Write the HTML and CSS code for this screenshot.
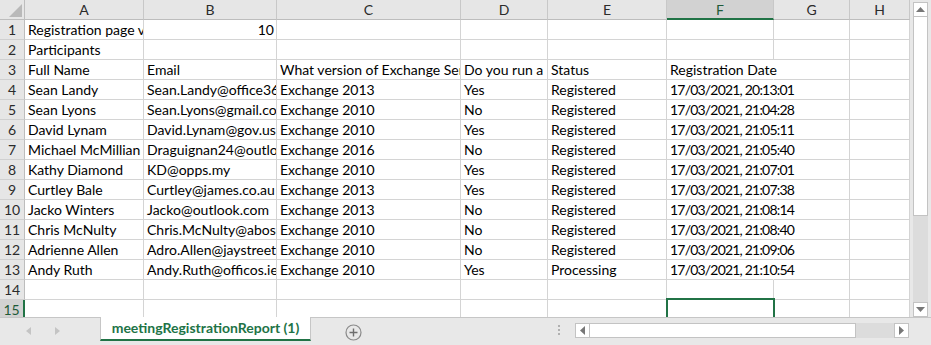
FILE: index.html
```html
<!DOCTYPE html>
<html lang="en">
<head>
<meta charset="utf-8">
<title>meetingRegistrationReport (1)</title>
<link rel="stylesheet" href="styles.css">
</head>
<body>
<div class="app">
  <div class="main">
    <div class="sheet">
      <div class="corner"><svg width="13" height="13" viewBox="0 0 13 13"><polygon points="13,0 13,13 0,13" fill="#b9b9b9"/></svg></div>
      <div class="ch">A</div><div class="ch">B</div><div class="ch">C</div><div class="ch">D</div><div class="ch">E</div><div class="ch selcol">F</div><div class="ch">G</div><div class="ch">H</div>

      <div class="rh">1</div><div class="c">Registration page views</div><div class="c num">10</div><div class="c"></div><div class="c"></div><div class="c"></div><div class="c"></div><div class="c"></div><div class="c"></div>
      <div class="rh">2</div><div class="c">Participants</div><div class="c"></div><div class="c"></div><div class="c"></div><div class="c"></div><div class="c"></div><div class="c"></div><div class="c"></div>
      <div class="rh">3</div><div class="c">Full Name</div><div class="c">Email</div><div class="c">What version of Exchange Server do you run?</div><div class="c">Do you run a hybrid deployment?</div><div class="c">Status</div><div class="c of">Registration Date</div><div class="c"></div><div class="c"></div>
      <div class="rh">4</div><div class="c">Sean Landy</div><div class="c">Sean.Landy@office365.com</div><div class="c">Exchange 2013</div><div class="c">Yes</div><div class="c">Registered</div><div class="c of dt">17/03/2021, 20:13:01</div><div class="c"></div><div class="c"></div>
      <div class="rh">5</div><div class="c">Sean Lyons</div><div class="c">Sean.Lyons@gmail.com</div><div class="c">Exchange 2010</div><div class="c">No</div><div class="c">Registered</div><div class="c of dt">17/03/2021, 21:04:28</div><div class="c"></div><div class="c"></div>
      <div class="rh">6</div><div class="c">David Lynam</div><div class="c">David.Lynam@gov.us</div><div class="c">Exchange 2010</div><div class="c">Yes</div><div class="c">Registered</div><div class="c of dt">17/03/2021, 21:05:11</div><div class="c"></div><div class="c"></div>
      <div class="rh">7</div><div class="c">Michael McMillian</div><div class="c">Draguignan24@outlook.com</div><div class="c">Exchange 2016</div><div class="c">No</div><div class="c">Registered</div><div class="c of dt">17/03/2021, 21:05:40</div><div class="c"></div><div class="c"></div>
      <div class="rh">8</div><div class="c">Kathy Diamond</div><div class="c">KD@opps.my</div><div class="c">Exchange 2010</div><div class="c">Yes</div><div class="c">Registered</div><div class="c of dt">17/03/2021, 21:07:01</div><div class="c"></div><div class="c"></div>
      <div class="rh">9</div><div class="c">Curtley Bale</div><div class="c">Curtley@james.co.au</div><div class="c">Exchange 2013</div><div class="c">Yes</div><div class="c">Registered</div><div class="c of dt">17/03/2021, 21:07:38</div><div class="c"></div><div class="c"></div>
      <div class="rh">10</div><div class="c">Jacko Winters</div><div class="c">Jacko@outlook.com</div><div class="c">Exchange 2013</div><div class="c">No</div><div class="c">Registered</div><div class="c of dt">17/03/2021, 21:08:14</div><div class="c"></div><div class="c"></div>
      <div class="rh">11</div><div class="c">Chris McNulty</div><div class="c">Chris.McNulty@abosoft.com</div><div class="c">Exchange 2010</div><div class="c">No</div><div class="c">Registered</div><div class="c of dt">17/03/2021, 21:08:40</div><div class="c"></div><div class="c"></div>
      <div class="rh">12</div><div class="c">Adrienne Allen</div><div class="c">Adro.Allen@jaystreet.com</div><div class="c">Exchange 2010</div><div class="c">No</div><div class="c">Registered</div><div class="c of dt">17/03/2021, 21:09:06</div><div class="c"></div><div class="c"></div>
      <div class="rh">13</div><div class="c">Andy Ruth</div><div class="c">Andy.Ruth@officos.ie</div><div class="c">Exchange 2010</div><div class="c">Yes</div><div class="c">Processing</div><div class="c of dt">17/03/2021, 21:10:54</div><div class="c"></div><div class="c"></div>
      <div class="rh">14</div><div class="c"></div><div class="c"></div><div class="c"></div><div class="c"></div><div class="c"></div><div class="c"></div><div class="c"></div><div class="c"></div>
      <div class="rh selrow">15</div><div class="c"></div><div class="c"></div><div class="c"></div><div class="c"></div><div class="c"></div><div class="c sel"></div><div class="c"></div><div class="c"></div>
    </div>
    <div class="vscroll">
      <div class="sbtn"><svg width="9" height="5" viewBox="0 0 9 5"><polygon points="0,5 9,5 4.5,0" fill="#777"/></svg></div>
      <div class="vtrack"><div class="vthumb"></div></div>
      <div class="sbtn"><svg width="9" height="5" viewBox="0 0 9 5"><polygon points="0,0 9,0 4.5,5" fill="#777"/></svg></div>
    </div>
  </div>
  <div class="tabbar">
    <div class="tabnav">
      <svg class="navarrow" width="5" height="8" viewBox="0 0 5 8"><polygon points="5,0 5,8 0,4" fill="#c4c4c4"/></svg>
      <svg class="navarrow" width="5" height="8" viewBox="0 0 5 8"><polygon points="0,0 0,8 5,4" fill="#c4c4c4"/></svg>
    </div>
    <div class="tab">meetingRegistrationReport (1)</div>
    <div class="tabrest">
      <svg class="addsheet" width="17" height="17" viewBox="0 0 17 17"><circle cx="8.5" cy="8.5" r="7.5" fill="none" stroke="#8a8a8a" stroke-width="1.2"/><path d="M8.5 4.5v8M4.5 8.5h8" stroke="#6e6e6e" stroke-width="1.4"/></svg>
      <div class="splitter"><span></span><span></span><span></span></div>
      <div class="hscroll">
        <div class="sbtn"><svg width="5" height="9" viewBox="0 0 5 9"><polygon points="5,0 5,9 0,4.5" fill="#777"/></svg></div>
        <div class="hthumb"></div>
        <div class="htrack"></div>
        <div class="sbtn"><svg width="5" height="9" viewBox="0 0 5 9"><polygon points="0,0 0,9 5,4.5" fill="#777"/></svg></div>
      </div>
    </div>
  </div>
</div>
</body>
</html>
```

FILE: styles.css
```css
* { box-sizing: border-box; }
html, body { margin: 0; padding: 0; background: #fff; }
body {
  font-family: Lato, "Liberation Sans", sans-serif;
  font-size: 14px;
  color: #000;
  width: 931px;
  height: 345px;
  overflow: hidden;
}
.app { display: flex; flex-direction: column; width: 931px; height: 345px; }
.main { display: flex; height: 317px; overflow: hidden; }
.sheet {
  width: 910px;
  height: 317px;
  overflow: hidden;
  display: grid;
  grid-template-columns: 25px 119px 133px 184px 87px 119px 107px 76px 60px;
  grid-auto-rows: 20px;
}
.corner {
  background: #e6e6e6;
  border-right: 1px solid #bdbdbd;
  border-bottom: 1px solid #bdbdbd;
  display: flex;
  align-items: flex-end;
  justify-content: flex-end;
  padding: 0 2px 2px 0;
}
.corner svg { display: block; }
.ch {
  background: #e6e6e6;
  border-right: 1px solid #c8c8c8;
  border-bottom: 1px solid #bdbdbd;
  text-align: center;
  line-height: 19px;
  color: #2b2b2b;
}
.ch.selcol {
  background: #d2d2d2;
  border-bottom: 2px solid #217346;
  color: #1f5a38;
}
.rh {
  background: #e6e6e6;
  border-right: 1px solid #bdbdbd;
  border-bottom: 1px solid #d0d0d0;
  text-align: center;
  line-height: 20px;
  color: #2b2b2b;
}
.rh.selrow {
  background: #d2d2d2;
  border-right: 2px solid #217346;
  color: #1f5a38;
}
.c {
  border-right: 1px solid #d4d4d4;
  border-bottom: 1px solid #d4d4d4;
  line-height: 20px;
  padding: 0 2px 0 3px;
  white-space: nowrap;
  overflow: hidden;
}
.c.num { text-align: right; }
.c.of { overflow: visible; border-right-color: transparent; }
.c.dt { letter-spacing: -0.8px; }
.c.sel { position: relative; overflow: visible; }
.c.sel::after {
  content: "";
  position: absolute;
  left: -1px;
  top: -2px;
  right: -2px;
  bottom: -2px;
  border: 2px solid #217346;
}
.vscroll {
  width: 21px;
  background: #e8e8e8;
  padding: 2px 3px 0 3px;
  display: flex;
  flex-direction: column;
}
.sbtn {
  width: 15px;
  height: 15px;
  flex: none;
  background: #fff;
  border: 1px solid #c3c3c3;
  display: flex;
  align-items: center;
  justify-content: center;
}
.sbtn svg { display: block; }
.vtrack {
  flex: 1;
  background: #dcdcdc;
}
.vthumb {
  height: 199px;
  background: #fff;
  border: 1px solid #c3c3c3;
  border-top: none;
}
.tabbar {
  display: flex;
  height: 28px;
  background: #e8e8e8;
  align-items: flex-start;
}
.tabnav {
  width: 100px;
  height: 28px;
  border-top: 1px solid #c6c6c6;
  display: flex;
  align-items: center;
  padding: 0 0 2px 26px;
  gap: 24px;
}
.navarrow { display: block; }
.tab {
  width: 211px;
  height: 24px;
  background: #fff;
  border: 1px solid #c6c6c6;
  border-top: none;
  border-bottom: 2px solid #217346;
  color: #217346;
  font-weight: bold;
  font-size: 14px;
  text-align: center;
  line-height: 22px;
}
.tabrest {
  flex: 1;
  height: 28px;
  border-top: 1px solid #c6c6c6;
  display: flex;
  align-items: flex-start;
}
.addsheet { display: block; margin: 6px 0 0 34px; }
.splitter {
  margin: 7px 0 0 196px;
  display: flex;
  flex-direction: column;
  gap: 2px;
}
.splitter span { width: 2px; height: 2px; background: #b0b0b0; display: block; }
.hscroll {
  display: flex;
  margin: 5px 0 0 15px;
  width: 334px;
  height: 15px;
}
.hthumb {
  width: 266px;
  height: 15px;
  background: #fff;
  border: 1px solid #c3c3c3;
  border-left: none;
}
.htrack { flex: 1; background: #dcdcdc; }
```
